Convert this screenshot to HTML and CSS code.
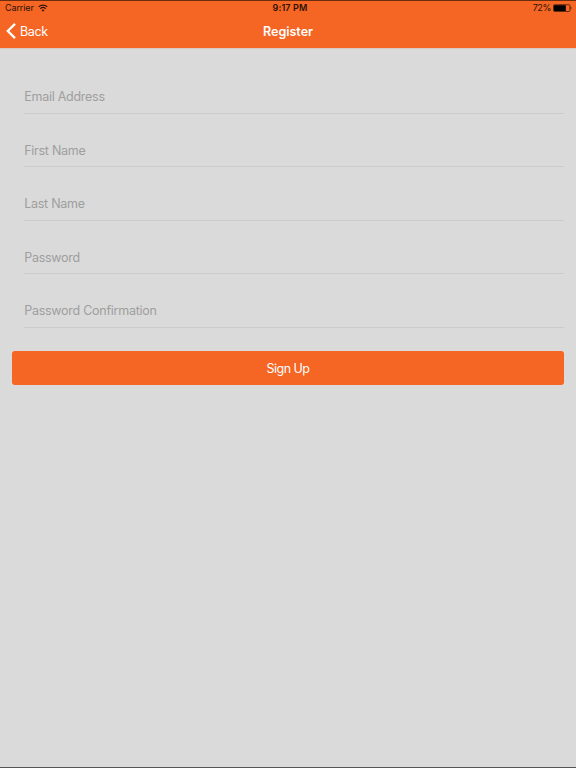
FILE: index.html
```html
<!DOCTYPE html>
<html lang="en">
<head>
<meta charset="utf-8">
<title>Register</title>
<link rel="stylesheet" href="styles.css">
</head>
<body>
<header class="top">
  <div class="status">
    <div class="carrier"><span class="carrier-name">Carrier</span>
      <svg class="wifi" width="10" height="8" viewBox="0 0 10 8" fill="none" stroke="#2b1205" stroke-width="1.2"><path d="M.8 2.8a6.2 6.2 0 0 1 8.4 0M2.4 4.7a3.8 3.8 0 0 1 5.2 0"/><path d="M3.6 6.1a2 2 0 0 1 2.8 0L5 7.7z" fill="#2b1205" stroke="none"/></svg>
    </div>
    <div class="time">9:17 PM</div>
    <div class="power"><span class="percent">72%</span>
      <svg width="19" height="8" viewBox="0 0 19 8"><rect x=".5" y=".7" width="16.4" height="6.8" rx="1" fill="none" stroke="#2b1205" stroke-width=".7"/><rect x="1" y="1.2" width="11.8" height="5.8" fill="#000"/><path d="M17.6 2.6q1.8 1.5 0 3z" fill="#2b1205"/></svg>
    </div>
  </div>
  <nav class="nav">
    <a class="back"><svg width="10" height="16" viewBox="0 0 10 16" fill="none" stroke="#fff" stroke-width="2.3"><path d="M9 .9 1.8 8 9 15.1"/></svg><span class="back-label">Back</span></a>
    <h1 class="title">Register</h1>
  </nav>
</header>
<main class="form">
  <div class="field"><span class="email">Email Address</span></div>
  <div class="field"><span class="first">First Name</span></div>
  <div class="field"><span class="last">Last Name</span></div>
  <div class="field"><span class="pass">Password</span></div>
  <div class="field"><span class="confirm">Password Confirmation</span></div>
  <button class="submit"><span>Sign Up</span></button>
</main>
</body>
</html>
```
FILE: styles.css
```css
* { box-sizing: border-box; }
body {
  margin: 0;
  height: 768px;
  overflow: hidden;
  background: #dadada;
  border-bottom: 1px solid #555;
  font-family: Inter, "Liberation Sans", sans-serif;
}
.top {
  height: 48px;
  background: #f56523;
  border-top: 1px solid #6b2d10;
  box-shadow: 0 1px 0 #d9c8c0;
}
.status {
  display: grid;
  grid-template-columns: 1fr auto 1fr;
  height: 14px;
  padding: 0 4px 0 5px;
  align-items: center;
  font-size: 9px;
  line-height: 14px;
  color: #2b1205;
}
.carrier, .power { display: flex; align-items: center; gap: 4px; }
.carrier { letter-spacing: -0.1px; }
.power { justify-content: flex-end; gap: 2px; letter-spacing: -0.35px; }
.time { margin-left: 3px; font-weight: 600; letter-spacing: 0.15px; }
.nav {
  display: grid;
  grid-template-columns: 1fr auto 1fr;
  height: 32px;
  padding: 0 6px;
  align-items: center;
  color: #fff;
}
.back { display: flex; align-items: center; gap: 4px; font-size: 12.5px; letter-spacing: -0.35px; }
.title { margin: 0; font-size: 12.5px; font-weight: 600; }
.form { padding: 12px 12px 0; }
.field {
  height: 53.6px;
  margin-left: 12px;
  padding-top: 28px;
  border-bottom: 1px solid #cbcbcc;
  font-size: 12.5px;
  line-height: 18px;
  letter-spacing: -0.26px;
  color: #9e9e9e;
}
.email, .first, .last, .pass, .confirm { margin-left: 0.2px; }
.submit {
  display: block;
  width: 100%;
  height: 34px;
  margin-top: 23px;
  padding: 0;
  border: 0;
  border-radius: 3px;
  background: #f56523;
  color: #fff;
  font: 12.5px/35px Inter, "Liberation Sans", sans-serif;
  letter-spacing: -0.5px;
}
```
